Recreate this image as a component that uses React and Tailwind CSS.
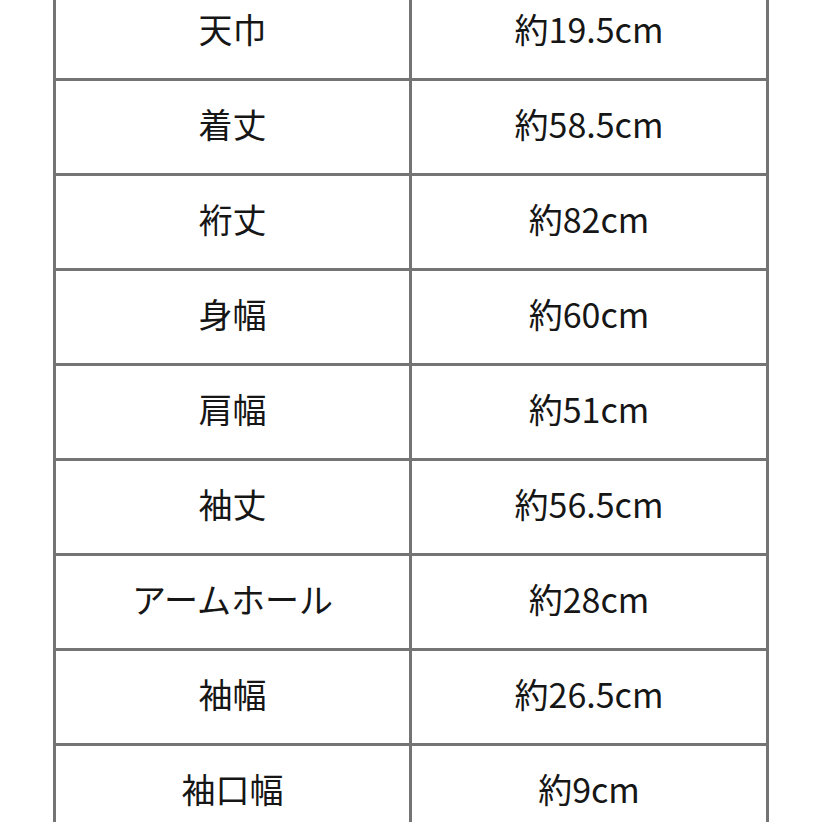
import React from "react";

const rows = [
  ["天巾", "約19.5cm"],
  ["着丈", "約58.5cm"],
  ["裄丈", "約82cm"],
  ["身幅", "約60cm"],
  ["肩幅", "約51cm"],
  ["袖丈", "約56.5cm"],
  ["アームホール", "約28cm"],
  ["袖幅", "約26.5cm"],
  ["袖口幅", "約9cm"],
];

const cellClass =
  "flex h-[92px] items-center justify-center bg-white pb-[6px] text-[34px] leading-none text-[#161616]";

export default function App() {
  return (
    <div
      className="h-[822px] w-[822px] overflow-hidden bg-white"
      style={{ fontFamily: '"Noto Sans CJK JP", "Noto Sans", sans-serif' }}
    >
      <div className="ml-[53px] -mt-[17px] grid w-[716px] grid-cols-[353px_354px] gap-[3px] border-[3px] border-[#747474] bg-[#747474]">
        {rows.map(([label, value]) => (
          <React.Fragment key={label}>
            <div className={cellClass}>{label}</div>
            <div className={cellClass}>{value}</div>
          </React.Fragment>
        ))}
      </div>
    </div>
  );
}
